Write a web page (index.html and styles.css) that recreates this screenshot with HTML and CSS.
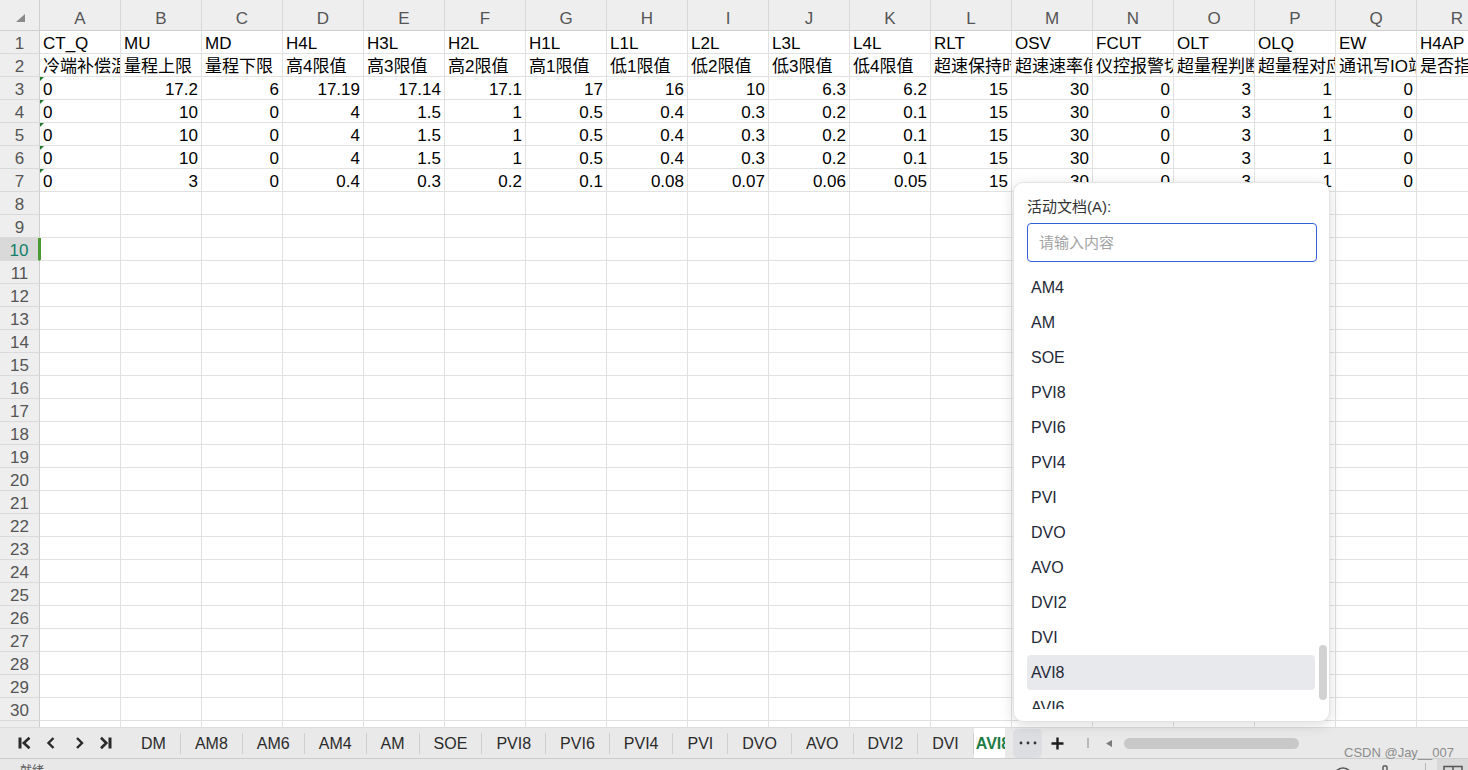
FILE: index.html
```html
<!DOCTYPE html>
<html lang="zh-CN">
<head>
<meta charset="utf-8">
<title>表格</title>
<link rel="stylesheet" href="styles.css">
</head>
<body>
<div class="sheet">
  <div class="grid">
    <div class="ch corner"><svg width="9" height="8" viewBox="0 0 9 8"><polygon points="9,0 9,8 0,8" fill="#8a8a8a"/></svg></div>
    <div class="ch">A</div><div class="ch">B</div><div class="ch">C</div><div class="ch">D</div><div class="ch">E</div><div class="ch">F</div><div class="ch">G</div><div class="ch">H</div><div class="ch">I</div><div class="ch">J</div><div class="ch">K</div><div class="ch">L</div><div class="ch">M</div><div class="ch">N</div><div class="ch">O</div><div class="ch">P</div><div class="ch">Q</div><div class="ch">R</div>

    <div class="rh">1</div><div>CT_Q</div><div>MU</div><div>MD</div><div>H4L</div><div>H3L</div><div>H2L</div><div>H1L</div><div>L1L</div><div>L2L</div><div>L3L</div><div>L4L</div><div>RLT</div><div>OSV</div><div>FCUT</div><div>OLT</div><div>OLQ</div><div>EW</div><div>H4AP</div>

    <div class="rh">2</div><div>冷端补偿温度</div><div>量程上限</div><div>量程下限</div><div>高4限值</div><div>高3限值</div><div>高2限值</div><div>高1限值</div><div>低1限值</div><div>低2限值</div><div>低3限值</div><div>低4限值</div><div>超速保持时间</div><div>超速速率值</div><div>仪控报警切除</div><div>超量程判断时间</div><div>超量程对应</div><div>通讯写IO站</div><div>是否指示</div>

    <div class="rh">3</div><div class="g">0</div><div class="n">17.2</div><div class="n">6</div><div class="n">17.19</div><div class="n">17.14</div><div class="n">17.1</div><div class="n">17</div><div class="n">16</div><div class="n">10</div><div class="n">6.3</div><div class="n">6.2</div><div class="n">15</div><div class="n">30</div><div class="n">0</div><div class="n">3</div><div class="n">1</div><div class="n">0</div><div></div>

    <div class="rh">4</div><div class="g">0</div><div class="n">10</div><div class="n">0</div><div class="n">4</div><div class="n">1.5</div><div class="n">1</div><div class="n">0.5</div><div class="n">0.4</div><div class="n">0.3</div><div class="n">0.2</div><div class="n">0.1</div><div class="n">15</div><div class="n">30</div><div class="n">0</div><div class="n">3</div><div class="n">1</div><div class="n">0</div><div></div>

    <div class="rh">5</div><div class="g">0</div><div class="n">10</div><div class="n">0</div><div class="n">4</div><div class="n">1.5</div><div class="n">1</div><div class="n">0.5</div><div class="n">0.4</div><div class="n">0.3</div><div class="n">0.2</div><div class="n">0.1</div><div class="n">15</div><div class="n">30</div><div class="n">0</div><div class="n">3</div><div class="n">1</div><div class="n">0</div><div></div>

    <div class="rh">6</div><div class="g">0</div><div class="n">10</div><div class="n">0</div><div class="n">4</div><div class="n">1.5</div><div class="n">1</div><div class="n">0.5</div><div class="n">0.4</div><div class="n">0.3</div><div class="n">0.2</div><div class="n">0.1</div><div class="n">15</div><div class="n">30</div><div class="n">0</div><div class="n">3</div><div class="n">1</div><div class="n">0</div><div></div>

    <div class="rh">7</div><div class="g">0</div><div class="n">3</div><div class="n">0</div><div class="n">0.4</div><div class="n">0.3</div><div class="n">0.2</div><div class="n">0.1</div><div class="n">0.08</div><div class="n">0.07</div><div class="n">0.06</div><div class="n">0.05</div><div class="n">15</div><div class="n">30</div><div class="n">0</div><div class="n">3</div><div class="n">1</div><div class="n">0</div><div></div>

    <div class="rh">8</div><div></div><div></div><div></div><div></div><div></div><div></div><div></div><div></div><div></div><div></div><div></div><div></div><div></div><div></div><div></div><div></div><div></div><div></div>
    <div class="rh">9</div><div></div><div></div><div></div><div></div><div></div><div></div><div></div><div></div><div></div><div></div><div></div><div></div><div></div><div></div><div></div><div></div><div></div><div></div>
    <div class="rh sel">10</div><div class="sel-cell"></div><div></div><div></div><div></div><div></div><div></div><div></div><div></div><div></div><div></div><div></div><div></div><div></div><div></div><div></div><div></div><div></div><div></div>
    <div class="rh">11</div><div></div><div></div><div></div><div></div><div></div><div></div><div></div><div></div><div></div><div></div><div></div><div></div><div></div><div></div><div></div><div></div><div></div><div></div>
    <div class="rh">12</div><div></div><div></div><div></div><div></div><div></div><div></div><div></div><div></div><div></div><div></div><div></div><div></div><div></div><div></div><div></div><div></div><div></div><div></div>
    <div class="rh">13</div><div></div><div></div><div></div><div></div><div></div><div></div><div></div><div></div><div></div><div></div><div></div><div></div><div></div><div></div><div></div><div></div><div></div><div></div>
    <div class="rh">14</div><div></div><div></div><div></div><div></div><div></div><div></div><div></div><div></div><div></div><div></div><div></div><div></div><div></div><div></div><div></div><div></div><div></div><div></div>
    <div class="rh">15</div><div></div><div></div><div></div><div></div><div></div><div></div><div></div><div></div><div></div><div></div><div></div><div></div><div></div><div></div><div></div><div></div><div></div><div></div>
    <div class="rh">16</div><div></div><div></div><div></div><div></div><div></div><div></div><div></div><div></div><div></div><div></div><div></div><div></div><div></div><div></div><div></div><div></div><div></div><div></div>
    <div class="rh">17</div><div></div><div></div><div></div><div></div><div></div><div></div><div></div><div></div><div></div><div></div><div></div><div></div><div></div><div></div><div></div><div></div><div></div><div></div>
    <div class="rh">18</div><div></div><div></div><div></div><div></div><div></div><div></div><div></div><div></div><div></div><div></div><div></div><div></div><div></div><div></div><div></div><div></div><div></div><div></div>
    <div class="rh">19</div><div></div><div></div><div></div><div></div><div></div><div></div><div></div><div></div><div></div><div></div><div></div><div></div><div></div><div></div><div></div><div></div><div></div><div></div>
    <div class="rh">20</div><div></div><div></div><div></div><div></div><div></div><div></div><div></div><div></div><div></div><div></div><div></div><div></div><div></div><div></div><div></div><div></div><div></div><div></div>
    <div class="rh">21</div><div></div><div></div><div></div><div></div><div></div><div></div><div></div><div></div><div></div><div></div><div></div><div></div><div></div><div></div><div></div><div></div><div></div><div></div>
    <div class="rh">22</div><div></div><div></div><div></div><div></div><div></div><div></div><div></div><div></div><div></div><div></div><div></div><div></div><div></div><div></div><div></div><div></div><div></div><div></div>
    <div class="rh">23</div><div></div><div></div><div></div><div></div><div></div><div></div><div></div><div></div><div></div><div></div><div></div><div></div><div></div><div></div><div></div><div></div><div></div><div></div>
    <div class="rh">24</div><div></div><div></div><div></div><div></div><div></div><div></div><div></div><div></div><div></div><div></div><div></div><div></div><div></div><div></div><div></div><div></div><div></div><div></div>
    <div class="rh">25</div><div></div><div></div><div></div><div></div><div></div><div></div><div></div><div></div><div></div><div></div><div></div><div></div><div></div><div></div><div></div><div></div><div></div><div></div>
    <div class="rh">26</div><div></div><div></div><div></div><div></div><div></div><div></div><div></div><div></div><div></div><div></div><div></div><div></div><div></div><div></div><div></div><div></div><div></div><div></div>
    <div class="rh">27</div><div></div><div></div><div></div><div></div><div></div><div></div><div></div><div></div><div></div><div></div><div></div><div></div><div></div><div></div><div></div><div></div><div></div><div></div>
    <div class="rh">28</div><div></div><div></div><div></div><div></div><div></div><div></div><div></div><div></div><div></div><div></div><div></div><div></div><div></div><div></div><div></div><div></div><div></div><div></div>
    <div class="rh">29</div><div></div><div></div><div></div><div></div><div></div><div></div><div></div><div></div><div></div><div></div><div></div><div></div><div></div><div></div><div></div><div></div><div></div><div></div>
    <div class="rh">30</div><div></div><div></div><div></div><div></div><div></div><div></div><div></div><div></div><div></div><div></div><div></div><div></div><div></div><div></div><div></div><div></div><div></div><div></div>
    <div class="rh">31</div><div></div><div></div><div></div><div></div><div></div><div></div><div></div><div></div><div></div><div></div><div></div><div></div><div></div><div></div><div></div><div></div><div></div><div></div>
  </div>
</div>

<div class="tabbar">
  <div class="nav">
    <svg class="nav-btn" width="28" height="14" viewBox="0 0 28 14"><rect x="8.5" y="1.5" width="3" height="11" fill="#2a2a2a"/><polyline points="19.5,1.8 13.8,7 19.5,12.2" fill="none" stroke="#2a2a2a" stroke-width="2.6"/></svg>
    <svg class="nav-btn" width="28" height="14" viewBox="0 0 28 14"><polyline points="15.5,2 10.5,7 15.5,12" fill="none" stroke="#2a2a2a" stroke-width="2.4"/></svg>
    <svg class="nav-btn" width="28" height="14" viewBox="0 0 28 14"><polyline points="11,2 16,7 11,12" fill="none" stroke="#2a2a2a" stroke-width="2.4"/></svg>
    <svg class="nav-btn" width="28" height="14" viewBox="0 0 28 14"><polyline points="7,1.8 12.3,7 7,12.2" fill="none" stroke="#2a2a2a" stroke-width="2.6"/><rect x="14.5" y="1.5" width="3" height="11" fill="#2a2a2a"/></svg>
  </div>
  <div class="tabs">
    <div class="tab">DM</div>
    <div class="tab">AM8</div>
    <div class="tab">AM6</div>
    <div class="tab">AM4</div>
    <div class="tab">AM</div>
    <div class="tab">SOE</div>
    <div class="tab">PVI8</div>
    <div class="tab">PVI6</div>
    <div class="tab">PVI4</div>
    <div class="tab">PVI</div>
    <div class="tab">DVO</div>
    <div class="tab">AVO</div>
    <div class="tab">DVI2</div>
    <div class="tab">DVI</div>
    <div class="tab active">AVI8</div>
  </div>
  <div class="more"><svg width="18" height="4" viewBox="0 0 18 4"><circle cx="2" cy="2" r="1.4" fill="#333"/><circle cx="9" cy="2" r="1.4" fill="#333"/><circle cx="16" cy="2" r="1.4" fill="#333"/></svg></div>
  <div class="add"><svg width="13" height="13" viewBox="0 0 13 13"><path d="M6.5 0.5V12.5M0.5 6.5H12.5" stroke="#1e1e1e" stroke-width="2.4"/></svg></div>
  <div class="vsep"></div>
  <svg class="tri" width="6" height="7" viewBox="0 0 6 7"><polygon points="6,0 0,3.5 6,7" fill="#7a7a7a"/></svg>
  <div class="hthumb"></div>
</div>

<div class="status">
  <span class="status-text">就绪</span>
  <div class="status-right">
    <svg class="st-circle" width="22" height="11" viewBox="0 0 22 11"><circle cx="11" cy="11" r="9" fill="none" stroke="#555" stroke-width="1.6"/></svg>
    <svg class="st-lock" width="10" height="11" viewBox="0 0 10 11"><rect x="3" y="1" width="4" height="10" rx="1" fill="none" stroke="#555" stroke-width="1.4"/></svg>
    <div class="st-line"></div>
    <div class="st-box"><svg width="20" height="8" viewBox="0 0 20 8"><rect x="1" y="1.5" width="18" height="8" fill="none" stroke="#555" stroke-width="1.5"/><path d="M10 1.5V8" stroke="#555" stroke-width="1.5"/></svg></div>
  </div>
</div>

<div class="popup">
  <div class="popup-label">活动文档(A):</div>
  <input class="search" type="text" placeholder="请输入内容">
  <div class="list">
    <div class="item">AM4</div>
    <div class="item">AM</div>
    <div class="item">SOE</div>
    <div class="item">PVI8</div>
    <div class="item">PVI6</div>
    <div class="item">PVI4</div>
    <div class="item">PVI</div>
    <div class="item">DVO</div>
    <div class="item">AVO</div>
    <div class="item">DVI2</div>
    <div class="item">DVI</div>
    <div class="item on">AVI8</div>
    <div class="item">AVI6</div>
  </div>
  <div class="vthumb"></div>
</div>

<div class="watermark">CSDN @Jay__007</div>
</body>
</html>
```

FILE: styles.css
```css
html, body {
  margin: 0;
  padding: 0;
}
body {
  width: 1468px;
  height: 770px;
  overflow: hidden;
  position: relative;
  display: flex;
  flex-direction: column;
  background: #ffffff;
  font-family: "Liberation Sans", "Noto Sans CJK SC", sans-serif;
}

/* ---------- sheet ---------- */
.sheet {
  flex: none;
  height: 727px;
  overflow: hidden;
}
.grid {
  display: grid;
  grid-template-columns: 40px repeat(18, 81px);
  grid-template-rows: 31px;
  grid-auto-rows: 23px;
  width: 1498px;
}
.grid > div {
  box-sizing: border-box;
  position: relative;
  border-right: 1px solid #e1e1e1;
  border-bottom: 1px solid #e1e1e1;
  overflow: hidden;
  white-space: nowrap;
  font-size: 17px;
  line-height: 20px;
  padding: 3px 3px 0 3px;
  color: #000;
}
.grid > .ch {
  background: #eeeeee;
  color: #555555;
  text-align: center;
  padding-top: 9px;
  border-right-color: #d8d8d8;
  border-bottom-color: #cfcfcf;
}
.grid > .corner {
  padding: 14px 0 0 16px;
  border-right-color: #cfcfcf;
}
.corner svg {
  display: block;
}
.grid > .rh {
  background: #eeeeee;
  color: #555555;
  text-align: center;
  padding-left: 0;
  padding-right: 0;
  border-right-color: #cfcfcf;
  border-bottom-color: #dadada;
}
.grid > .rh.sel {
  background: #d9d9d9;
  color: #12806a;
  border-right: 2px solid #4a9a32;
}
.grid > .sel-cell {
  box-shadow: inset 1px 0 0 #4a9a32;
}
.grid > .n {
  text-align: right;
}
.grid > .g::before {
  content: "";
  position: absolute;
  left: 0;
  top: 0;
  border-top: 4px solid #1f7a2e;
  border-right: 4px solid transparent;
}

/* ---------- tab bar ---------- */
.tabbar {
  flex: none;
  height: 32px;
  box-sizing: border-box;
  border-top: 1px solid #dcdcdc;
  border-bottom: 1px solid #cdcdcd;
  background: #e9e9e9;
  display: flex;
  align-items: center;
}
.nav {
  flex: none;
  width: 127px;
  box-sizing: border-box;
  padding-left: 10px;
  display: flex;
  align-items: center;
}
.nav-btn {
  display: block;
  flex: none;
}
.tabs {
  flex: none;
  width: 878px;
  height: 100%;
  overflow: hidden;
  display: flex;
  align-items: center;
}
.tab {
  flex: none;
  height: 21px;
  line-height: 21px;
  padding: 0 14px;
  border-right: 1px solid #cfcfcf;
  font-size: 16px;
  color: #2b2b2b;
  white-space: nowrap;
}
.tab.active {
  align-self: stretch;
  height: auto;
  display: flex;
  align-items: center;
  background: #ffffff;
  color: #1e7b45;
  font-weight: bold;
  border-right: none;
  padding-left: 2px;
}
.more {
  flex: none;
  margin-left: 8px;
  width: 29px;
  height: 29px;
  border-radius: 5px;
  background: #dcdee2;
  display: flex;
  align-items: center;
  justify-content: center;
}
.more svg, .add svg {
  display: block;
}
.add {
  flex: none;
  width: 30px;
  height: 29px;
  display: flex;
  align-items: center;
  justify-content: center;
}
.vsep {
  flex: none;
  margin-left: 15px;
  width: 2px;
  height: 10px;
  background: #b8b8b8;
}
.tri {
  flex: none;
  display: block;
  margin-left: 17px;
}
.hthumb {
  flex: none;
  margin-left: 12px;
  width: 175px;
  height: 11px;
  border-radius: 6px;
  background: #c8c8c8;
}

/* ---------- status bar ---------- */
.status {
  flex: 1;
  display: flex;
  align-items: flex-start;
  background: #e8e8e8;
  padding-left: 20px;
  overflow: hidden;
}
.status-text {
  margin-top: 6px;
  font-size: 12px;
  line-height: 12px;
  color: #555;
}
.status-right {
  margin-left: auto;
  height: 100%;
  display: flex;
  align-items: flex-start;
}
.st-circle {
  display: block;
  margin-top: 7px;
}
.st-lock {
  display: block;
  margin-top: 6px;
  margin-left: 26px;
}
.st-line {
  margin-top: 4px;
  margin-left: 35px;
  width: 1px;
  height: 8px;
  background: #b5b5b5;
}
.st-box {
  margin-left: 11px;
  width: 31px;
  height: 100%;
  background: #d9d9d9;
  display: flex;
  justify-content: center;
  padding-top: 6px;
  box-sizing: border-box;
}
.st-box svg {
  display: block;
}

/* ---------- popup ---------- */
.popup {
  position: absolute;
  left: 1013px;
  top: 182px;
  width: 317px;
  height: 540px;
  box-sizing: border-box;
  background: #ffffff;
  border: 1px solid #e3e3e3;
  border-radius: 10px;
  box-shadow: 0 3px 14px rgba(0, 0, 0, 0.14);
  padding: 14px 12px 0 13px;
}
.popup-label {
  font-size: 15px;
  line-height: 20px;
  color: #333333;
}
.search {
  display: block;
  margin: 6px 0 0 0;
  width: 290px;
  height: 39px;
  box-sizing: border-box;
  border: 1px solid #3061d8;
  border-radius: 4px;
  padding: 0 11px;
  font-family: "Liberation Sans", "Noto Sans CJK SC", sans-serif;
  font-size: 15px;
  color: #333;
  background: #fff;
  outline: none;
}
.search::placeholder {
  color: #a3a3a3;
}
.list {
  margin-top: 8px;
  width: 288px;
  height: 439px;
  overflow: hidden;
}
.item {
  height: 35px;
  line-height: 35px;
  padding-left: 4px;
  font-size: 16px;
  color: #1f2937;
  border-radius: 4px;
}
.item.on {
  background: #e7e9ed;
}
.vthumb {
  position: absolute;
  right: 2px;
  top: 462px;
  width: 8px;
  height: 55px;
  border-radius: 4px;
  background: #d2d2d2;
}

/* ---------- watermark ---------- */
.watermark {
  position: absolute;
  left: 1344px;
  top: 745px;
  font-size: 13px;
  line-height: 15px;
  color: #8c8c8c;
  white-space: nowrap;
}
```
